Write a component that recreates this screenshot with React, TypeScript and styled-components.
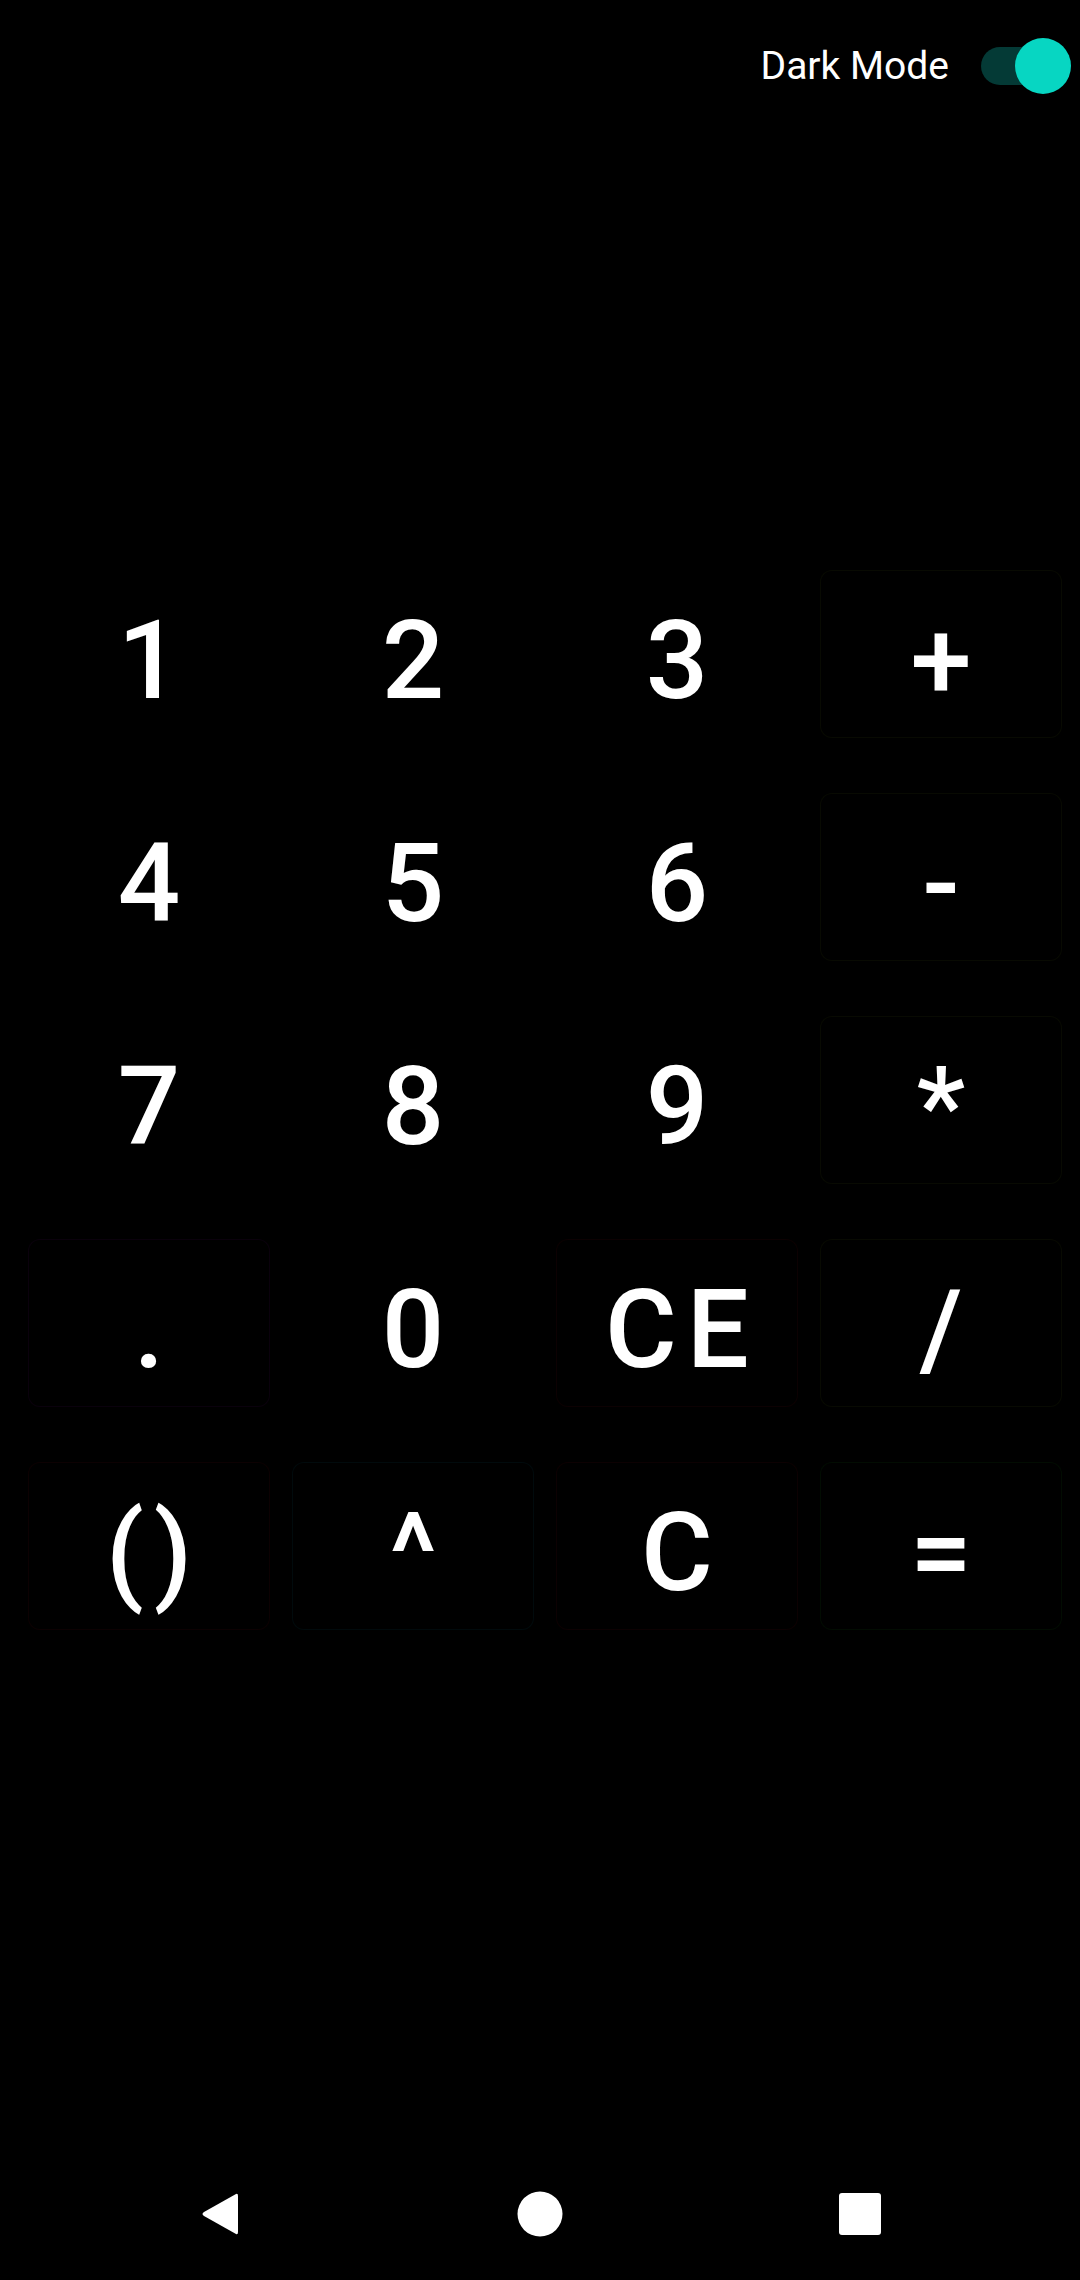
import styled, { createGlobalStyle } from "styled-components";

const GlobalStyle = createGlobalStyle`
  html, body {
    margin: 0;
    padding: 0;
    background: #000000;
  }
  body {
    font-family: Roboto, "Noto Sans", sans-serif;
  }
`;

interface Key {
  label: string;
  edge?: string;
}

const keys: Key[] = [
  { label: "1" },
  { label: "2" },
  { label: "3" },
  { label: "+", edge: "#4a5a10" },
  { label: "4" },
  { label: "5" },
  { label: "6" },
  { label: "-", edge: "#4a5a10" },
  { label: "7" },
  { label: "8" },
  { label: "9" },
  { label: "*", edge: "#4a5a10" },
  { label: ".", edge: "#5a0a70" },
  { label: "0" },
  { label: "CE", edge: "#6a0a10" },
  { label: "/", edge: "#4a5a10" },
  { label: "()", edge: "#6a0a10" },
  { label: "^", edge: "#0a5a6a" },
  { label: "C", edge: "#6a0a10" },
  { label: "=", edge: "#106a10" },
];

const Screen = styled.div`
  width: 1080px;
  height: 2280px;
  background: #000000;
  display: flex;
  flex-direction: column;
  overflow: hidden;
`;

const TopBar = styled.div`
  height: 132px;
  display: flex;
  justify-content: flex-end;
  align-items: center;
  gap: 32px;
  padding-right: 17px;
`;

const ModeLabel = styled.span`
  color: #ffffff;
  font-size: 39px;
  font-weight: 400;
`;

const Track = styled.div`
  position: relative;
  width: 82px;
  height: 38px;
  border-radius: 19px;
  background: #043a36;
`;

const Thumb = styled.div`
  position: absolute;
  right: -8px;
  top: -9px;
  width: 56px;
  height: 56px;
  border-radius: 50%;
  background: #07d6c2;
`;

const Keypad = styled.div`
  margin-top: 438px;
  padding: 0 18px 0 28px;
  display: grid;
  grid-template-columns: repeat(4, 242px);
  grid-auto-rows: 168px;
  column-gap: 22px;
  row-gap: 55px;
`;

const KeyButton = styled.button<{ $edge?: string }>`
  display: flex;
  align-items: center;
  justify-content: center;
  margin: 0;
  padding: 14px 0 0 0;
  border: 1px solid ${({ $edge }) => ($edge ? $edge + "1c" : "transparent")};
  border-radius: 12px;
  background: #000000;
  color: #ffffff;
  font-family: Roboto, "Noto Sans", sans-serif;
  font-size: 110px;
  font-weight: 500;
  letter-spacing: 0.0892em;
  text-indent: 0.0892em;
  line-height: 1;
`;

const Spacer = styled.div`
  flex: 1;
`;

const NavBar = styled.div`
  height: 132px;
  display: grid;
  grid-template-columns: repeat(3, 320px);
  justify-content: center;
  align-items: center;
  justify-items: center;
`;

function App() {
  return (
    <>
      <GlobalStyle />
      <Screen>
        <TopBar>
          <ModeLabel>Dark Mode</ModeLabel>
          <Track>
            <Thumb />
          </Track>
        </TopBar>
        <Keypad>
          {keys.map((k) => (
            <KeyButton key={k.label} $edge={k.edge}>
              {k.label}
            </KeyButton>
          ))}
        </Keypad>
        <Spacer />
        <NavBar>
          <svg width="44" height="48" viewBox="0 0 44 48">
            <path
              d="M38 4 Q40 3 40 6 L40 42 Q40 45 38 44 L6 26 Q3 24 6 22 Z"
              fill="#ffffff"
            />
          </svg>
          <svg width="46" height="46" viewBox="0 0 46 46">
            <circle cx="23" cy="23" r="22.5" fill="#ffffff" />
          </svg>
          <svg width="44" height="44" viewBox="0 0 44 44">
            <rect x="1" y="1" width="42" height="42" rx="3" fill="#ffffff" />
          </svg>
        </NavBar>
      </Screen>
    </>
  );
}

export default App;
